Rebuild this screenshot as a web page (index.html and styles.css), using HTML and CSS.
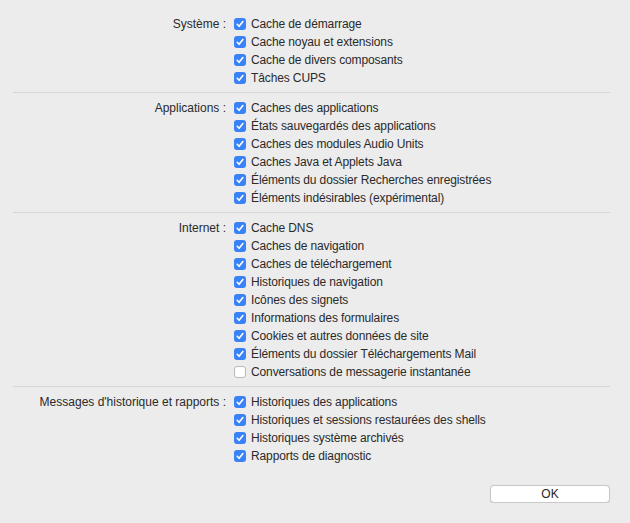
FILE: index.html
```html
<!DOCTYPE html>
<html>
<head>
    <title>Nettoyage</title>
    <link rel="stylesheet" href="styles.css">
</head>
<body>
    <div class="panel">
        <div class="group">
            <div class="label">Système :</div>
            <div class="items">
                <label class="item"><span class="box on"></span>Cache de démarrage</label>
                <label class="item"><span class="box on"></span>Cache noyau et extensions</label>
                <label class="item"><span class="box on"></span>Cache de divers composants</label>
                <label class="item"><span class="box on"></span>Tâches CUPS</label>
            </div>
        </div>
        <div class="group">
            <div class="label">Applications :</div>
            <div class="items">
                <label class="item"><span class="box on"></span>Caches des applications</label>
                <label class="item"><span class="box on"></span>États sauvegardés des applications</label>
                <label class="item"><span class="box on"></span>Caches des modules Audio Units</label>
                <label class="item"><span class="box on"></span>Caches Java et Applets Java</label>
                <label class="item"><span class="box on"></span>Éléments du dossier Recherches enregistrées</label>
                <label class="item"><span class="box on"></span>Éléments indésirables (expérimental)</label>
            </div>
        </div>
        <div class="group">
            <div class="label">Internet :</div>
            <div class="items">
                <label class="item"><span class="box on"></span>Cache DNS</label>
                <label class="item"><span class="box on"></span>Caches de navigation</label>
                <label class="item"><span class="box on"></span>Caches de téléchargement</label>
                <label class="item"><span class="box on"></span>Historiques de navigation</label>
                <label class="item"><span class="box on"></span>Icônes des signets</label>
                <label class="item"><span class="box on"></span>Informations des formulaires</label>
                <label class="item"><span class="box on"></span>Cookies et autres données de site</label>
                <label class="item"><span class="box on"></span>Éléments du dossier Téléchargements Mail</label>
                <label class="item"><span class="box"></span>Conversations de messagerie instantanée</label>
            </div>
        </div>
        <div class="group last">
            <div class="label">Messages d'historique et rapports :</div>
            <div class="items">
                <label class="item"><span class="box on"></span>Historiques des applications</label>
                <label class="item"><span class="box on"></span>Historiques et sessions restaurées des shells</label>
                <label class="item"><span class="box on"></span>Historiques système archivés</label>
                <label class="item"><span class="box on"></span>Rapports de diagnostic</label>
            </div>
        </div>
        <div class="actions">
            <button class="ok">OK</button>
        </div>
    </div>
</body>
</html>
```

FILE: styles.css
```css
body {
    margin: 0;
    background: #ececec;
    font-family: "Liberation Sans", Arial, sans-serif;
    font-size: 12px;
    letter-spacing: -0.12px;
    color: #2a2a2a;
}

.panel {
    padding: 15px 20px 0 13px;
}

.group {
    display: grid;
    grid-template-columns: 213px 1fr;
    column-gap: 8px;
    padding: 0 0 5px;
    margin-bottom: 6px;
    border-bottom: 1px solid #d6d6d6;
}

.group.last {
    border-bottom: none;
}

.label {
    text-align: right;
    line-height: 18px;
    letter-spacing: 0;
}

.item {
    display: flex;
    align-items: center;
    height: 18px;
}

.box {
    width: 12px;
    height: 12px;
    margin-right: 5px;
    border-radius: 3px;
    background: #fff;
    border: 1px solid #b8b8b8;
    box-sizing: border-box;
    flex: none;
}

.box.on {
    border: none;
    background: #3a82f7 url("data:image/svg+xml;utf8,<svg xmlns='http://www.w3.org/2000/svg' viewBox='0 0 12 12'><path d='M3.2 6.3 L5.1 8.3 L8.9 3.6' fill='none' stroke='white' stroke-width='1.6' stroke-linecap='round' stroke-linejoin='round'/></svg>") no-repeat center;
}

.actions {
    display: flex;
    justify-content: flex-end;
    padding-top: 9px;
}

.ok {
    width: 120px;
    height: 18px;
    background: #fff;
    border: 1px solid #c8c8c8;
    border-radius: 4px;
    font-family: inherit;
    font-size: 12px;
    color: #262626;
    padding: 0;
    box-shadow: 0 0.5px 1px rgba(0, 0, 0, 0.12);
}
```
